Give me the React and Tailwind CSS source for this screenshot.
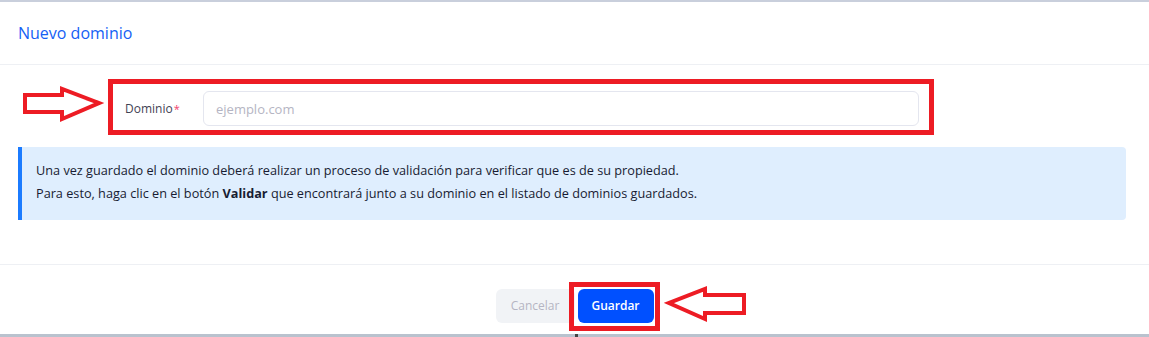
import React from "react";

const ArrowRight = () => (
  <svg width="84" height="40" viewBox="0 0 84 40" className="absolute left-[21px] top-[85px]">
    <polygon
      points="4,10 41,10 41,4 78,18 41,34 41,27 4,27"
      fill="none"
      stroke="#ed1c24"
      strokeWidth="4"
      strokeLinejoin="miter"
    />
  </svg>
);

const ArrowLeft = () => (
  <svg width="84" height="40" viewBox="0 0 84 40" className="absolute left-[664px] top-[285px]">
    <polygon
      points="80,10 41,10 41,4 5,18 41,34 41,28 80,28"
      fill="none"
      stroke="#ed1c24"
      strokeWidth="4"
      strokeLinejoin="miter"
    />
  </svg>
);

export default function App() {
  return (
    <div className="relative w-[1149px] h-[337px] bg-white overflow-hidden font-['Open_Sans',sans-serif]">
      <div className="h-[2px] bg-[#c9cfdc]" />

      {/* header */}
      <div className="h-[63px] flex items-center px-[18px] border-b border-[#eef0f4]">
        <h2 className="text-[16px] font-medium text-[#1460f5]">Nuevo dominio</h2>
      </div>

      {/* body */}
      <div className="pl-[18px] pr-[23px] pt-[26px] h-[200px] border-b border-[#eef0f4]">
        <div className="flex items-center pl-[107px]">
          <label className="w-[78px] text-[12px] text-[#3f4254]">
            Dominio<span className="text-[#f1416c] text-[11px] ml-[1px]">*</span>
          </label>
          <input
            placeholder="ejemplo.com"
            className="w-[716px] h-[35px] rounded-md border border-[#e4e6ef] px-[12px] text-[13px] text-[#3f4254] placeholder-[#b5b5c3] outline-none"
          />
        </div>

        <div className="mt-[21px] h-[73px] bg-[#dfeefe] border-l-4 border-[#1b7bff] rounded-r-[4px] pl-[14px] pt-[12px] text-[12.7px] text-[#181c32]">
          <p className="leading-[23px]">
            Una vez guardado el dominio deberá realizar un proceso de validación para verificar que es de su propiedad.
          </p>
          <p className="leading-[23px]">
            Para esto, haga clic en el botón <b className="font-bold">Validar</b> que encontrará junto a su dominio en el listado de dominios guardados.
          </p>
        </div>
      </div>

      {/* footer */}
      <div className="h-[69px] flex justify-center pt-[24px] gap-[3px]">
        <button className="w-[79px] h-[34px] rounded-md bg-[#f1f3f6] text-[12px] text-[#b5b5c3]">Cancelar</button>
        <button className="w-[76px] h-[34px] rounded-md bg-[#0050ff] text-[12px] font-semibold text-white">Guardar</button>
      </div>
      <div className="relative h-[3px] bg-[#b9c2ce]">
        <div className="absolute left-[575px] top-0 w-[3px] h-[3px] bg-[#444]" />
      </div>

      {/* annotations */}
      <div className="absolute left-[108px] top-[79px] w-[826px] h-[56px] border-[5px] border-[#ed1c24]" />
      <div className="absolute left-[569px] top-[282px] w-[91px] h-[49px] border-[5px] border-[#ed1c24]" />
      <ArrowRight />
      <ArrowLeft />
    </div>
  );
}
